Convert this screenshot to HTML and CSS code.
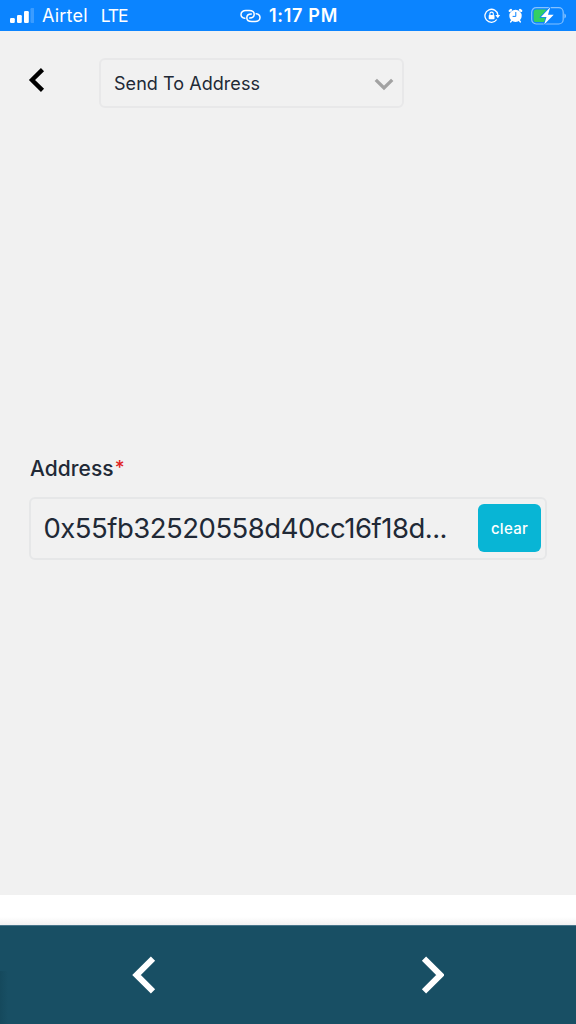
FILE: index.html
```html
<!DOCTYPE html>
<html lang="en">
<head>
<meta charset="utf-8">
<title>Send To Address</title>
<link rel="stylesheet" href="styles.css">
</head>
<body>
<div class="screen">
  <header class="status">
    <div class="status-left">
      <svg class="signal" width="24" height="16" viewBox="0 0 24 16" fill="#fff"><rect x="0" y="10" width="4.800" height="5" rx="1.2"/><rect x="7" y="7" width="4.800" height="8" rx="1.2"/><rect x="14" y="3" width="4.800" height="12" rx="1.2"/><rect x="20.5" y="0" width="4" height="15" rx="1.2" opacity=".2"/></svg>
      <span class="carrier">Airtel</span><span class="network">LTE</span>
    </div>
    <div class="status-time">
      <svg class="link" width="22" height="14" viewBox="0 0 22 14" fill="none" stroke="#fff" stroke-width="1.5" stroke-linecap="round"><path d="M4.800 9.300C2.200 8.900 1 7.300 1 5.500 1 3.200 3 1.500 5.800 1.500h3.400c3 0 5 1.600 5 3.800S12.300 9 9.700 9"/><path d="M16.200 4.700c2.600.400 3.800 2 3.800 3.800 0 2.300-2 4-4.800 4h-3.400c-3 0-5-1.600-5-3.800S8.700 5 11.300 5"/></svg>
      <span class="time">1:17 PM</span>
    </div>
    <div class="status-right">
      <svg class="lock" width="17" height="16" viewBox="0 0 17 16"><path d="M12.800 11.500A6.500 6.500 0 1 1 13.900 7" fill="none" stroke="#fff" stroke-width="1.300"/><path d="M11.300 7h4.900l-2.400 3.300z" fill="#fff"/><rect x="4.700" y="7" width="5.800" height="4.300" rx=".7" fill="#fff"/><path d="M5.900 7.300V5.800a1.700 1.700 0 0 1 3.400 0v1.500" fill="none" stroke="#fff" stroke-width="1.100"/></svg>
      <svg class="alarm" width="15" height="16" viewBox="0 0 15 16"><path d="M3 1.900 1.800 2.900M12 1.900 13.200 2.900" stroke="#fff" stroke-width="2.300" stroke-linecap="round"/><path d="M3.600 12.600 2.700 13.900M11.400 12.600l.9 1.300" stroke="#fff" stroke-width="1.600" stroke-linecap="round"/><circle cx="7.500" cy="7.900" r="6.200" fill="#fff"/><path d="M7.800 4v4.400H4.600" fill="none" stroke="#0b84ff" stroke-width="1"/></svg>
      <svg class="battery" width="35" height="20" viewBox="0 0 35 20"><rect x=".7" y="1.700" width="31.500" height="16.300" rx="4.500" fill="none" stroke="#fff" stroke-opacity=".5" stroke-width="1.200"/><path d="M33.400 7.500v5c1-.5 1.600-1.300 1.600-2.500s-.6-2-1.600-2.500z" fill="#fff" opacity=".5"/><rect x="2.600" y="3.600" width="14" height="12.500" rx="2.600" fill="#33cf62"/><path d="M19.200 1.200 10 10.900h5.500L13.200 18.500 22.700 8.800H17z" fill="#fff" stroke="#0b84ff" stroke-width="1.600" paint-order="stroke"/></svg>
    </div>
  </header>
  <main class="content">
    <div class="topbar">
      <svg class="back" width="18" height="26" viewBox="0 0 18 26" fill="none" stroke="#000" stroke-width="4.400"><path d="M15.500 2.600 5 13 15.500 23.400"/></svg>
      <div class="select">
        <span class="select-text">Send To Address</span>
        <svg width="20" height="13" viewBox="0 0 20 13" fill="none" stroke="#a2a2a2" stroke-width="3.300"><path d="M1.800 1.800 10 10 18.200 1.800"/></svg>
      </div>
    </div>
    <div class="field">
      <div class="label"><span class="label-text">Address</span><span class="required">*</span></div>
      <div class="input">
        <span class="value">0x55fb32520558d40cc16f18d...</span>
        <button class="clear">clear</button>
      </div>
    </div>
  </main>
  <div class="gap"></div>
  <nav class="nav">
    <div class="nav-item"><svg width="24" height="38" viewBox="0 0 24 38" fill="none" stroke="#fff" stroke-width="6"><path d="M21 2.600 4.500 19 21 35.400"/></svg></div>
    <div class="nav-item"><svg width="24" height="38" viewBox="0 0 24 38" fill="none" stroke="#fff" stroke-width="6"><path d="M4 2.600 20.500 19 4 35.400"/></svg></div>
  </nav>
</div>
</body>
</html>
```
FILE: styles.css
```css
* { box-sizing: border-box; }
body { margin: 0; font-family: Inter, "Liberation Sans", sans-serif; color: #212936; }
svg { display: block; flex: none; }
span { white-space: nowrap; }
.screen { width: 576px; height: 1024px; display: flex; flex-direction: column; overflow: hidden; background: #fff; }
.status { height: 31px; display: grid; grid-template-columns: 240px 1fr auto; background: #0b84ff; color: #fff; line-height: 31px; padding: 0 10px 0 10px; }
.status-left, .status-time, .status-right { display: flex; align-items: center; height: 31px; }
.carrier { margin-left: 8px; font-size: 18px; letter-spacing: .2px; }
.network { margin-left: 13px; font-size: 17.5px; letter-spacing: -1.1px; }
.status-time { margin-left: -10px; }
.time { margin-left: 7px; font-size: 18px; font-weight: 600; letter-spacing: .7px; }
.alarm { margin-left: 7px; }
.battery { margin-left: 8px; }
.lock { margin-left: -1px; }
.content { height: 864px; background: #f1f1f1; padding: 27px 29px 0; }
.topbar { display: flex; height: 50px; }
.back { margin: 9px 0 0 -2px; }
.select { width: 305px; height: 50px; margin-left: 54px; padding: 0 8px 0 13px; display: flex; align-items: center; justify-content: space-between; border: 2px solid #e8e8e9; border-radius: 6px; }
.select svg { margin-top: 2px; }
.select-text { font-size: 18px; letter-spacing: .05px; }
.field { margin-top: 346px; }
.label { height: 30px; line-height: 30px; font-size: 21px; font-weight: 500; display: flex; padding-left: 1px; }
.label-text { letter-spacing: .05px; }
.required { color: #e02424; font-size: 19px; line-height: 28px; margin-left: 1px; }
.input { width: 518px; height: 63px; margin-top: 13px; padding: 0 4px 2px 12.5px; display: flex; align-items: center; justify-content: space-between; border: 2px solid #e6e7e8; border-radius: 6px; }
.value { font-size: 27.5px; letter-spacing: -.5px; }
.clear { width: 63px; height: 48px; padding: 2px 0 0; border: 0; border-radius: 6px; background: #08b5d5; color: #fff; font: 500 15px Inter, sans-serif; letter-spacing: .3px; }
.gap { height: 30px; background: linear-gradient(#fff 22px, #f1f1f1); }
.nav { height: 99px; display: grid; grid-template-columns: 1fr 1fr; background: linear-gradient(90deg, #12435580, transparent 8px) 0 45px no-repeat, #184f64; border-top: 1px solid #48758a; }
.nav-item { display: flex; align-items: center; justify-content: center; }
```
